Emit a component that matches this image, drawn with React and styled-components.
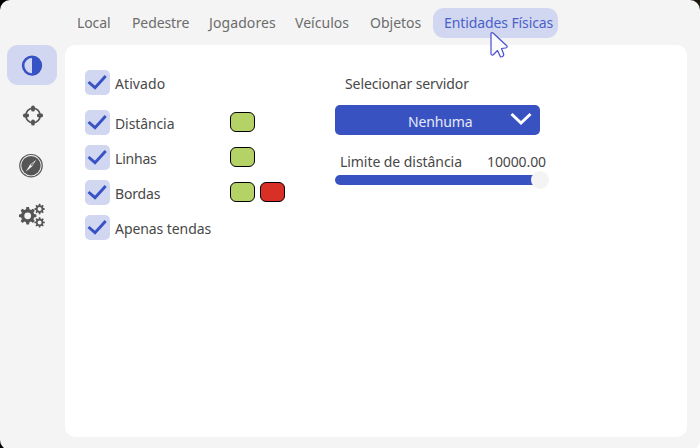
import React from "react";
import styled, { createGlobalStyle } from "styled-components";

const Global = createGlobalStyle`
  * { box-sizing: border-box; }
  html, body { margin: 0; height: 448px; overflow: hidden; }
  body {
    font-family: "Noto Sans", "Open Sans", sans-serif;
    font-size: 14px;
    background: linear-gradient(#000, #000) left / 50% 100% no-repeat,
      linear-gradient(#1c170c 0 50%, #fff 50% 100%);
  }
`;

const Window = styled.div`
  width: 700px;
  height: 450px;
  border-radius: 10px;
  background: #f4f4f4;
  display: grid;
  grid-template-columns: 65px 622px;
  grid-template-rows: 45px 392px;
`;

const Tabs = styled.nav`
  grid-column: 2;
  display: flex;
  padding-top: 8px;
`;

const Tab = styled.div`
  flex: none;
  width: ${(p) => p.$width}px;
  height: 30px;
  padding-left: ${(p) => (p.$active ? 11 : 12)}px;
  border-radius: 11px;
  line-height: 29px;
  white-space: nowrap;
  color: ${(p) => (p.$active ? "#4a62c8" : "#6c6c6c")};
  background: ${(p) => (p.$active ? "#d1d7f1" : "transparent")};
`;

const Text = styled.span`
  display: inline-block;
  white-space: nowrap;
  letter-spacing: ${(p) => p.$spacing || 0}px;
`;

const Sidebar = styled.aside`
  display: flex;
  flex-direction: column;
  padding-left: 7px;
  gap: 10px;
`;

const SideButton = styled.div`
  width: 50px;
  height: 40px;
  border-radius: 11px;
  display: grid;
  place-items: center;
  color: ${(p) => (p.$active ? "#3752c4" : "#555")};
  background: ${(p) => (p.$active ? "#d1d7f1" : "transparent")};
  svg { display: block; }
`;

const Panel = styled.main`
  background: #fff;
  border-radius: 10px;
  display: grid;
  grid-template-columns: 250px 215px;
  padding: 25px 0 0 20px;
  color: #484848;
`;

const Options = styled.section`
  display: flex;
  flex-direction: column;
  gap: 10px;
`;

const Option = styled.div`
  display: flex;
  height: 25px;
  margin-bottom: ${(p) => (p.$spaced ? 5 : 0)}px;
`;

const Check = styled.div`
  width: 25px;
  height: 25px;
  border-radius: 5px;
  background: #d1d7f1;
  svg { display: block; }
`;

const OptionLabel = styled.div`
  width: 115px;
  padding-left: 5px;
  line-height: 27px;
`;

const Swatches = styled.div`
  display: flex;
  gap: 5px;
  padding: 2px 0 0 5px;
`;

const Swatch = styled.div`
  width: 25px;
  height: 20px;
  border: 1px solid #000;
  border-radius: 6px;
  background: ${(p) => p.$color};
`;

const Settings = styled.section`
  width: 215px;
`;

const FieldLabel = styled.div`
  height: 35px;
  padding-left: 10px;
  line-height: 27px;
`;

const Select = styled.div`
  width: 205px;
  height: 30px;
  border-radius: 5px;
  background: #3852c2;
  color: #e6e9f8;
  display: flex;
  line-height: 33px;
  padding-left: 73px;
  svg { margin: 6px 8px 0 auto; }
`;

const SliderHead = styled.div`
  height: 35px;
  padding: 13px 4px 0 5px;
  display: flex;
  justify-content: space-between;
  line-height: 27px;
`;

const Track = styled.div`
  width: 205px;
  height: 10px;
  margin-top: 5px;
  border-radius: 5px;
  background: #3852c2;
  display: flex;
  align-items: center;
  justify-content: flex-end;
`;

const Thumb = styled.div`
  flex: none;
  width: 18px;
  height: 18px;
  margin-right: -9px;
  border-radius: 50%;
  background: #f4f4f4;
`;

const Pointer = styled.svg`
  position: absolute;
  left: 488px;
  top: 30px;
`;

const HalfCircle = () => (
  <svg width="22" height="22" viewBox="0 0 22 22">
    <circle cx="11" cy="11.6" r="8.9" fill="none" stroke="currentColor" strokeWidth="2.6" />
    <path d="M11 2v19.200a9.600 9.600 0 0 0 0-19.200z" fill="currentColor" />
  </svg>
);

const Crosshair = () => (
  <svg width="22" height="22" viewBox="0 0 22 22">
    <circle cx="12" cy="11.500" r="7.200" fill="none" stroke="currentColor" strokeWidth="1.600" />
    <path
      d="M12 3.300v2.400M12 17.300v2.400M3.800 11.500h2.400M17.800 11.500h2.400"
      stroke="currentColor"
      strokeWidth="3.800"
      strokeLinecap="round"
    />
  </svg>
);

const Compass = () => (
  <svg width="26" height="26" viewBox="0 0 26 26">
    <circle cx="12" cy="13.700" r="11.200" fill="none" stroke="currentColor" strokeWidth="1.200" />
    <circle cx="12" cy="13.700" r="9.700" fill="currentColor" />
    <path d="M17.300 7.700 13 14.600 6.700 19.700 11 12.800z" fill="#f4f4f4" />
    <path d="M15.600 9.800 12.700 13.900 11.800 13z" fill="currentColor" />
  </svg>
);

const gearPath = (cx, cy, outer, inner, teeth) => {
  const points = [];
  for (let i = 0; i < teeth; i += 1) {
    [[-0.33, inner], [-0.19, outer], [0.19, outer], [0.33, inner]].forEach(([o, r]) => {
      const a = ((i + o) / teeth) * Math.PI * 2;
      points.push(`${(cx + r * Math.sin(a)).toFixed(2)} ${(cy - r * Math.cos(a)).toFixed(2)}`);
    });
  }
  return `M${points.join("L")}Z`;
};

const hole = (cx, cy, r) => `M${cx - r} ${cy}a${r} ${r} 0 1 0 ${2 * r} 0a${r} ${r} 0 1 0 ${-2 * r} 0Z`;

const Gears = () => (
  <svg width="28" height="26" viewBox="0 0 28 26">
    <g fill="currentColor" fillRule="evenodd">
      <path d={gearPath(9.7, 13.8, 8.800, 6.700, 8) + hole(9.7, 13.8, 3.400)} />
      <path d={gearPath(21.6, 7, 5.200, 3.800, 8) + hole(21.6, 7, 2)} />
      <path d={gearPath(21.6, 20.4, 5.200, 3.800, 8) + hole(21.6, 20.4, 2)} />
    </g>
  </svg>
);

const tabs = [
  { label: "Local", width: 55, spacing: -0.1 },
  { label: "Pedestre", width: 77, spacing: -0.1 },
  { label: "Jogadores", width: 86, spacing: 0.1 },
  { label: "Veículos", width: 75, spacing: 0.03 },
  { label: "Objetos", width: 75, spacing: 0 },
  { label: "Entidades Físicas", width: 125, spacing: -0.1, active: true },
];

const GREEN = "#b5d266";
const RED = "#d93025";

const options = [
  { label: "Ativado", colors: [], spaced: true, spacing: 0.08 },
  { label: "Distância", colors: [GREEN], spacing: -0.1 },
  { label: "Linhas", colors: [GREEN], spacing: -0.2 },
  { label: "Bordas", colors: [GREEN, RED], spacing: -0.15 },
  { label: "Apenas tendas", colors: [], spacing: -0.07 },
];

export default function App() {
  return (
    <>
      <Global />
      <Window>
        <Tabs>
          {tabs.map((t) => (
            <Tab key={t.label} $width={t.width} $active={t.active}>
              <Text $spacing={t.spacing}>{t.label}</Text>
            </Tab>
          ))}
        </Tabs>
        <Sidebar>
          <SideButton $active><HalfCircle /></SideButton>
          <SideButton><Crosshair /></SideButton>
          <SideButton><Compass /></SideButton>
          <SideButton><Gears /></SideButton>
        </Sidebar>
        <Panel>
          <Options>
            {options.map((o) => (
              <Option key={o.label} $spaced={o.spaced}>
                <Check>
                  <svg width="25" height="25" viewBox="0 0 25 25">
                    <path d="M3.500 12 10 17.700 20.700 6" fill="none" stroke="#3852c4" strokeWidth="2.900" />
                  </svg>
                </Check>
                <OptionLabel><Text $spacing={o.spacing}>{o.label}</Text></OptionLabel>
                <Swatches>
                  {o.colors.map((c) => <Swatch key={c} $color={c} />)}
                </Swatches>
              </Option>
            ))}
          </Options>
          <Settings>
            <FieldLabel><Text $spacing={-0.1}>Selecionar servidor</Text></FieldLabel>
            <Select>
              <Text $spacing={-0.15}>Nenhuma</Text>
              <svg width="22" height="16" viewBox="0 0 22 16">
                <path d="M1.500 3 11 12 20.500 3" fill="none" stroke="#fff" strokeWidth="3" />
              </svg>
            </Select>
            <SliderHead>
              <Text $spacing={-0.06}>Limite de distância</Text>
              <Text $spacing={-0.1}>10000.00</Text>
            </SliderHead>
            <Track><Thumb /></Track>
          </Settings>
        </Panel>
      </Window>
      <Pointer width="20" height="30" viewBox="0 0 20 30">
        <path
          d="M3 3.500Q3.500 2 5 3L19 16Q19.500 18 17.500 18L13.500 18.500 15.800 24.500Q15.500 27 12.500 27L9.500 20.500 5 25Q3 25.500 3 23.500Z"
          fill="#fbfbfe"
          stroke="#4b4fce"
          strokeWidth="1.200"
          strokeLinejoin="round"
        />
      </Pointer>
    </>
  );
}
